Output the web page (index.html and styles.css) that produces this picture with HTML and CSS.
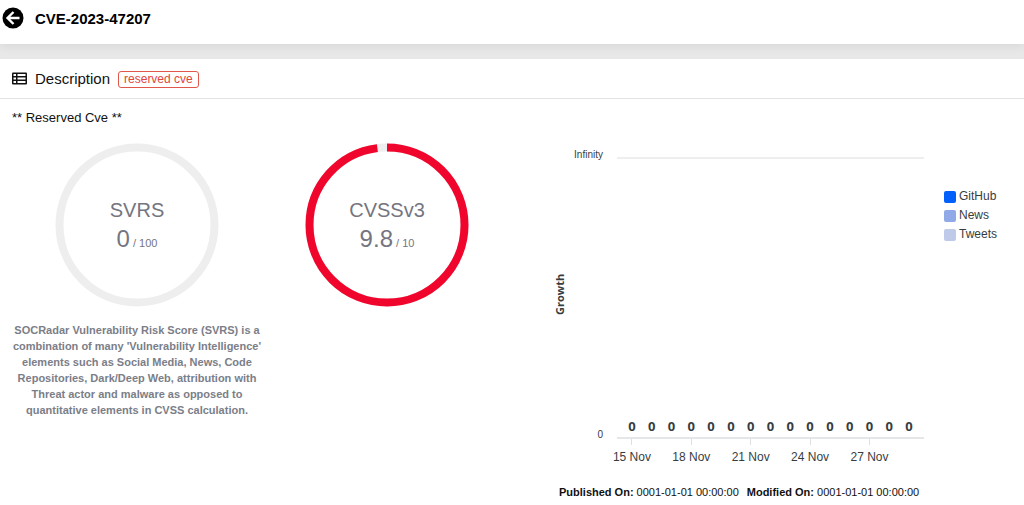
FILE: index.html
```html
<!DOCTYPE html>
<html lang="en">
<head>
    <meta charset="utf-8">
    <meta name="viewport" content="width=device-width, initial-scale=1">
    <title>CVE-2023-47207</title>

    <link rel="stylesheet" href="styles.css">
</head>
<body>
    <header class="topbar">
        <a class="back" href="#" aria-label="Back">
            <svg viewBox="0 0 22 22" width="22" height="22">
                <circle cx="11" cy="11" r="10.5" fill="#000"/>
                <path d="M17.5 11H6M11.5 5L5.5 11l6 6" fill="none" stroke="#fff" stroke-width="2.4"/>
            </svg>
        </a>
        <h1>CVE-2023-47207</h1>
    </header>

    <main class="panel">
        <div class="panel-header">
            <svg viewBox="0 0 15 13" width="15" height="13">
                <rect x="0" y="0.5" width="15" height="12" rx="1" fill="#111"/>
                <path d="M1.5 3h2.5M1.5 6.5h2.5M1.5 10h2.5M5.5 3h8M5.5 6.5h8M5.5 10h8" stroke="#fff" stroke-width="1.8"/>
            </svg>
            <h2>Description</h2>
            <span class="tag">reserved cve</span>
        </div>

        <div class="panel-body">
            <p class="summary">** Reserved Cve **</p>

            <div class="columns">
                <section class="score">
                    <div class="gauge">
                        <svg viewBox="0 0 164 164">
                            <circle class="track" cx="82" cy="82" r="77.5"/>
                        </svg>
                        <div class="gauge-text">
                            <span class="gauge-name">SVRS</span>
                            <span class="gauge-value">0<small> / 100</small></span>
                        </div>
                    </div>
                    <p class="note">SOCRadar Vulnerability Risk Score (SVRS) is a combination of many 'Vulnerability Intelligence' elements such as Social Media, News, Code Repositories, Dark/Deep Web, attribution with Threat actor and malware as opposed to quantitative elements in CVSS calculation.</p>
                </section>

                <section class="score">
                    <div class="gauge">
                        <svg viewBox="0 0 164 164">
                            <circle class="track" cx="82" cy="82" r="77.5"/>
                            <circle class="fill" cx="82" cy="82" r="77.5" pathLength="100" stroke-dasharray="98 2" transform="rotate(-90 82 82)"/>
                        </svg>
                        <div class="gauge-text">
                            <span class="gauge-name">CVSSv3</span>
                            <span class="gauge-value">9.8<small> / 10</small></span>
                        </div>
                    </div>
                </section>

                <section class="trend">
                    <div class="chart">
                        <div class="y-title">Growth</div>
                        <div class="y-axis">
                            <span>Infinity</span>
                            <span>0</span>
                        </div>
                        <div class="plot">
                            <span>0</span><span>0</span><span>0</span><span>0</span><span>0</span>
                            <span>0</span><span>0</span><span>0</span><span>0</span><span>0</span>
                            <span>0</span><span>0</span><span>0</span><span>0</span><span>0</span>
                        </div>
                        <ul class="legend">
                            <li class="github">GitHub</li>
                            <li class="news">News</li>
                            <li class="tweets">Tweets</li>
                        </ul>
                        <div class="x-axis">
                            <span>15 Nov</span>
                            <span>18 Nov</span>
                            <span>21 Nov</span>
                            <span>24 Nov</span>
                            <span>27 Nov</span>
                        </div>
                    </div>
                    <div class="dates">
                        <span><b>Published On:</b> 0001-01-01 00:00:00</span>
                        <span><b>Modified On:</b> 0001-01-01 00:00:00</span>
                    </div>
                </section>
            </div>
        </div>
    </main>
</body>
</html>
```
FILE: styles.css
```css
* {
    box-sizing: border-box;
}
body {
    margin: 0;
    min-height: 100vh;
    display: flex;
    flex-direction: column;
    background-color: #e8e8e9;
    color: #111;
    font-family: "Liberation Sans", Arial, sans-serif;
}
h1, h2, p, ul {
    margin: 0;
    padding: 0;
}
.topbar {
    display: flex;
    align-items: center;
    gap: 11px;
    height: 44px;
    padding: 0 2px 8px;
    background-color: #fff;
    box-shadow: 0 2px 10px rgba(0,0,0,0.08);
}
.back {
    display: flex;
}
h1 {
    font-size: 15px;
    color: #000;
}
.panel {
    flex: 1;
    margin-top: 15px;
    background-color: #fff;
}
.panel-header {
    display: flex;
    align-items: center;
    gap: 8px;
    height: 40px;
    padding: 0 12px;
    border-bottom: 1px solid #e2e2e5;
}
h2 {
    font-size: 15px;
    font-weight: normal;
}
.tag {
    margin-top: 2px;
    padding: 0 5px;
    border: 1px solid #e2574c;
    border-radius: 3px;
    color: #e2453a;
    font-size: 12px;
    line-height: 15px;
}
.panel-body {
    padding: 11px 12px 0;
}
.summary {
    font-size: 13px;
    line-height: 16px;
}
.columns {
    display: grid;
    grid-template-columns: minmax(0, 1fr) minmax(0, 1fr) minmax(0, 2fr);
    padding-top: 17px;
}
.score {
    display: flex;
    flex-direction: column;
    align-items: center;
}
.gauge {
    display: grid;
    width: 164px;
}
.gauge svg, .gauge-text {
    grid-area: 1 / 1;
}
.gauge circle {
    fill: none;
    stroke-width: 8px;
}
.gauge .track {
    stroke: #eee;
}
.gauge .fill {
    stroke: #f0062d;
}
.gauge-text {
    display: flex;
    flex-direction: column;
    align-items: center;
    justify-content: center;
    padding-top: 3px;
    color: #75757f;
}
.gauge-name {
    font-size: 20px;
    line-height: 28px;
}
.gauge-value {
    font-size: 24px;
    line-height: 30px;
}
.gauge-value small {
    font-size: 11px;
}
.note {
    width: 256px;
    padding-top: 15px;
    color: #7b7e88;
    font-size: 11px;
    font-weight: bold;
    line-height: 16px;
    text-align: center;
}
.trend {
    padding: 14px 12px 0 40px;
}
.chart {
    display: grid;
    grid-template-columns: 15px 36px minmax(0, 1fr) 76px;
    grid-template-rows: 282px auto;
    color: #373d3f;
}
.y-title {
    writing-mode: vertical-rl;
    transform: rotate(180deg);
    padding-top: 8px;
    text-align: center;
    font-family: "Open Sans", sans-serif;
    font-size: 11px;
    font-weight: bold;
    line-height: 15px;
}
.y-axis {
    display: flex;
    flex-direction: column;
    justify-content: space-between;
    margin: -8px 0 -2px;
    font-size: 10px;
    line-height: 12px;
    text-align: right;
}
.plot {
    display: flex;
    align-items: flex-end;
    margin-left: 14px;
    padding: 0 5px 2px;
    border-top: 2px solid #eee;
    border-bottom: 2px solid #e4e6e8;
}
.plot span {
    flex: 1;
    font-family: "Open Sans", sans-serif;
    font-size: 13px;
    font-weight: bold;
    line-height: 18px;
    text-align: center;
}
.legend {
    margin-left: 20px;
    padding-top: 30px;
    list-style: none;
    font-size: 12px;
    line-height: 19px;
}
.legend li {
    display: flex;
    align-items: center;
    gap: 3px;
}
.legend li::before {
    content: "";
    flex: none;
    width: 12px;
    height: 12px;
    border-radius: 2px;
}
.github::before {
    background-color: #0460fb;
}
.news::before {
    background-color: #8faae6;
}
.tweets::before {
    background-color: #bfcae9;
}
.x-axis {
    grid-column: 3;
    display: flex;
    margin-left: 14px;
    padding: 0 5px;
    font-size: 12px;
    line-height: 14px;
}
/* each label covers three days and is centred on the first one */
.x-axis span {
    width: 20%;
    display: flex;
    flex-direction: column;
    align-items: center;
    padding-right: calc(40% / 3);
    white-space: nowrap;
}
.x-axis span::before {
    content: "";
    height: 6px;
    margin-bottom: 5px;
    border-left: 1px solid #e0e0e0;
}
.dates {
    display: flex;
    gap: 8px;
    padding: 20px 0 0 7px;
    color: #111;
    font-size: 11px;
    line-height: 16px;
    white-space: nowrap;
}
```
